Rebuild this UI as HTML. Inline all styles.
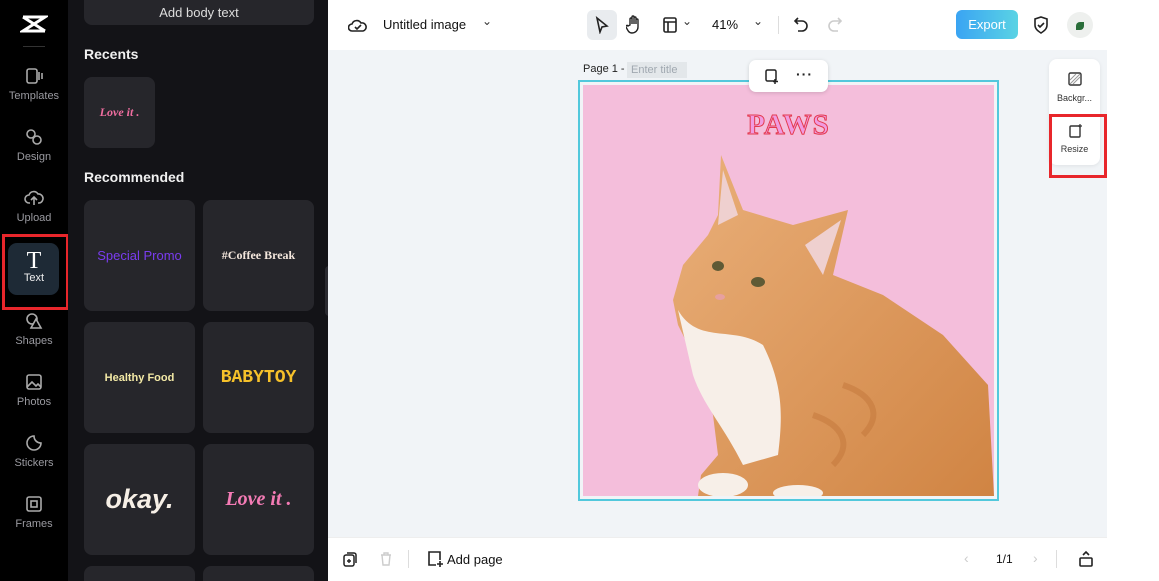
<!DOCTYPE html>
<html><head><meta charset="utf-8"><style>
*{margin:0;padding:0;box-sizing:border-box}
html,body{width:1159px;height:581px;overflow:hidden}
body{font-family:"Liberation Sans",sans-serif;background:#fff;position:relative}
.side{position:absolute;left:0;top:0;width:68px;height:581px;background:#000}
.panel{position:absolute;left:68px;top:0;width:260px;height:581px;background:#131317;overflow:hidden}
.nav{position:absolute;left:0;width:68px;text-align:center;color:#9a9aa0;font-size:11px}
.nav svg{display:block;margin:0 auto 4px}
.card{position:absolute;background:#26262b;border-radius:8px;display:flex;align-items:center;justify-content:center}
h3{position:absolute;color:#f0f0f0;font-size:14px;font-weight:bold}
.main{position:absolute;left:328px;top:50px;width:779px;height:487px;background:#f1f4f7}
.top{position:absolute;left:328px;top:0;width:779px;height:50px;background:#fff}
.bot{position:absolute;left:328px;top:537px;width:779px;height:44px;background:#fff;border-top:1px solid #eee}
.ic{position:absolute}
</style></head><body>
<div class="side">
 <svg class="ic" style="left:20px;top:14px" width="28" height="20" viewBox="0 0 28 20"><path d="M3 3h22L3 17h22M3 3l22 14" stroke="#fff" stroke-width="3" fill="none"/></svg>
 <div style="position:absolute;left:23px;top:46px;width:22px;height:1px;background:#333"></div>
 <div class="nav" style="top:66px"><svg width="20" height="20" viewBox="0 0 20 20"><rect x="3" y="3" width="10" height="14" rx="2" stroke="#aaa" stroke-width="1.6" fill="none"/><path d="M15 6v8M18 7v6" stroke="#aaa" stroke-width="1.6"/></svg>Templates</div>
 <div class="nav" style="top:127px"><svg width="20" height="20" viewBox="0 0 20 20"><circle cx="7" cy="7" r="4" stroke="#aaa" stroke-width="1.6" fill="none"/><circle cx="13" cy="13" r="4" stroke="#aaa" stroke-width="1.6" fill="none"/></svg>Design</div>
 <div class="nav" style="top:188px"><svg width="20" height="20" viewBox="0 0 20 20"><path d="M6 15H5a4 4 0 010-8 5 5 0 019-1 4 4 0 011 9h-1M10 9v8M7 12l3-3 3 3" stroke="#aaa" stroke-width="1.6" fill="none"/></svg>Upload</div>
 <div style="position:absolute;left:8px;top:243px;width:51px;height:52px;border-radius:9px;background:#1e2a36"></div>
 <div style="position:absolute;left:2px;top:234px;width:67px;height:76px;border:3px solid #e8262b"></div>
 <div class="nav" style="top:250px;color:#eee;font-size:11px"><div style="font-family:'Liberation Serif',serif;font-size:24px;line-height:22px;color:#fff">T</div>Text</div>
 <div class="nav" style="top:311px"><svg width="20" height="20" viewBox="0 0 20 20"><circle cx="8" cy="8" r="5" stroke="#aaa" stroke-width="1.6" fill="none"/><path d="M12 8l5 9H7z" stroke="#aaa" stroke-width="1.6" fill="#000"/></svg>Shapes</div>
 <div class="nav" style="top:372px"><svg width="20" height="20" viewBox="0 0 20 20"><rect x="3" y="3" width="14" height="14" rx="2" stroke="#aaa" stroke-width="1.6" fill="none"/><path d="M3 15l5-5 4 4 2-2 3 3" stroke="#aaa" stroke-width="1.6" fill="none"/></svg>Photos</div>
 <div class="nav" style="top:433px"><svg width="20" height="20" viewBox="0 0 20 20"><path d="M10 3a7 7 0 107 7c-4 0-7-3-7-7z" stroke="#aaa" stroke-width="1.6" fill="none"/></svg>Stickers</div>
 <div class="nav" style="top:494px"><svg width="20" height="20" viewBox="0 0 20 20"><rect x="3" y="3" width="14" height="14" rx="2" stroke="#aaa" stroke-width="1.6" fill="none"/><rect x="7" y="7" width="6" height="6" stroke="#aaa" stroke-width="1.6" fill="none"/></svg>Frames</div>
</div>
<div class="panel">
 <div class="card" style="left:16px;top:-10px;width:230px;height:35px;color:#ddd;font-size:13px;padding-top:10px">Add body text</div>
 <h3 style="left:16px;top:46px">Recents</h3>
 <div class="card" style="left:16px;top:77px;width:71px;height:71px;color:#f06ea0;font-family:'Liberation Serif',serif;font-style:italic;font-weight:bold;font-size:12px">Love it .</div>
 <h3 style="left:16px;top:169px">Recommended</h3>
 <div class="card" style="left:16px;top:200px;width:111px;height:111px;color:#7a3cf0;font-size:13px">Special Promo</div>
 <div class="card" style="left:135px;top:200px;width:111px;height:111px;color:#f3e6dc;font-family:'Liberation Serif',serif;font-weight:bold;font-size:12px">#Coffee Break</div>
 <div class="card" style="left:16px;top:322px;width:111px;height:111px;color:#f3e9a6;font-weight:bold;font-size:11px">Healthy Food</div>
 <div class="card" style="left:135px;top:322px;width:111px;height:111px;color:#f6c12a;font-family:'Liberation Mono',monospace;font-weight:bold;font-size:18px">BABYTOY</div>
 <div class="card" style="left:16px;top:444px;width:111px;height:111px;color:#f6efe6;font-weight:bold;font-style:italic;font-size:27px">okay.</div>
 <div class="card" style="left:135px;top:444px;width:111px;height:111px;color:#f47bb5;font-family:'Liberation Serif',serif;font-weight:bold;font-style:italic;font-size:20px">Love it .</div>
 <div class="card" style="left:16px;top:566px;width:111px;height:40px"></div>
 <div class="card" style="left:135px;top:566px;width:111px;height:40px"></div>
 <div style="position:absolute;left:257px;top:266px;width:8px;height:50px;background:#2a2a30;border-radius:4px"></div>
</div>
<div class="top">
 <svg class="ic" style="left:20px;top:16px" width="20" height="18" viewBox="0 0 20 18"><path d="M5 15H4a3.5 3.5 0 010-7 5 5 0 019-1 4 4 0 012 8zM7 11l2 2 4-4" stroke="#222" stroke-width="1.6" fill="none"/></svg>
 <div style="position:absolute;left:55px;top:17px;font-size:13px;color:#111">Untitled image</div>
 <div style="position:absolute;left:154px;top:14px;font-size:12px;color:#333">⌄</div>
 <div style="position:absolute;left:259px;top:10px;width:30px;height:30px;background:#e9ecef;border-radius:6px"></div>
 <svg class="ic" style="left:266px;top:16px" width="16" height="18" viewBox="0 0 16 18"><path d="M3 2l10 8-5 1-2 5z" stroke="#222" stroke-width="1.6" fill="none"/></svg>
 <svg class="ic" style="left:298px;top:15px" width="16" height="19" viewBox="0 0 16 19"><path d="M4 10V4a1 1 0 012 0v5V2a1 1 0 012 0v7V3a1 1 0 012 0v6V5a1 1 0 012 0v7a6 6 0 01-6 6c-3 0-4-2-6-6a1 1 0 012-1z" stroke="#222" stroke-width="1.4" fill="none"/></svg>
 <svg class="ic" style="left:334px;top:16px" width="16" height="18" viewBox="0 0 16 18"><rect x="2" y="2" width="12" height="14" rx="1.5" stroke="#222" stroke-width="1.6" fill="none"/><path d="M2 6h12M6 6v10" stroke="#222" stroke-width="1.6"/></svg>
 <div style="position:absolute;left:354px;top:14px;font-size:12px;color:#333">⌄</div>
 <div style="position:absolute;left:384px;top:17px;font-size:13px;color:#111">41%</div>
 <div style="position:absolute;left:425px;top:14px;font-size:12px;color:#333">⌄</div>
 <div style="position:absolute;left:450px;top:16px;width:1px;height:18px;background:#ddd"></div>
 <svg class="ic" style="left:465px;top:16px" width="16" height="18" viewBox="0 0 16 18"><path d="M5 2L2 5l3 3M2 5h7a5 5 0 010 10H5" stroke="#222" stroke-width="1.6" fill="none"/></svg>
 <svg class="ic" style="left:499px;top:16px" width="16" height="18" viewBox="0 0 16 18"><path d="M11 2l3 3-3 3M14 5H7a5 5 0 000 10h4" stroke="#ccc" stroke-width="1.6" fill="none"/></svg>
 <div style="position:absolute;left:628px;top:10px;width:62px;height:29px;border-radius:6px;background:linear-gradient(90deg,#3aa4f3,#5ad3e4);color:#fff;font-size:13px;text-align:center;line-height:29px">Export</div>
 <svg class="ic" style="left:704px;top:15px" width="18" height="20" viewBox="0 0 18 20"><path d="M9 2l6 2v6c0 4-3 6-6 8-3-2-6-4-6-8V4zM6 10l2 2 4-4" stroke="#222" stroke-width="1.6" fill="none"/></svg>
 <div style="position:absolute;left:739px;top:12px;width:26px;height:26px;border-radius:50%;background:#eef0ee"><div style="position:absolute;left:9px;top:10px;width:8px;height:8px;background:#2a6e3a;border-radius:50% 0"></div></div>
</div>
<div class="main">
 <div style="position:absolute;left:255px;top:13px;font-size:11px;color:#222">Page 1 -</div>
 <div style="position:absolute;left:299px;top:12px;width:60px;height:16px;background:#e3e7ea;color:#a0a8b0;font-size:11px;padding:2px 4px">Enter title</div>
 <div style="position:absolute;left:250px;top:30px;width:421px;height:421px;border:2px solid #52c8dc"></div>
 <div style="position:absolute;left:255px;top:35px;width:411px;height:411px;background:#f4bedb;overflow:hidden">
  <div style="position:absolute;left:0;width:411px;top:24px;text-align:center;font-family:'Liberation Serif',serif;font-weight:bold;font-size:29px;color:#f09be0;-webkit-text-stroke:1px #e43a4e;letter-spacing:1px">PAWS</div>
  <svg width="411" height="411" style="position:absolute;left:0;top:0">
   <defs><linearGradient id="g" x1="0" y1="0" x2="1" y2="1"><stop offset="0" stop-color="#eab07a"/><stop offset="1" stop-color="#d08443"/></linearGradient></defs>
   <path d="M138,70 L160,125 L210,140 L265,125 L250,190 L300,210 L360,250 L405,300 L411,411 L115,411 L118,390 L135,370 L130,330 L110,270 L95,240 L90,215 L100,180 L125,150 L135,130 Z" fill="url(#g)"/>
   <path d="M140,85 L155,130 L135,140 Z" fill="#efd0cf"/>
   <path d="M258,135 L240,190 L222,160 Z" fill="#efd0cf"/>
   <path d="M95,225 C115,260 150,240 180,260 C200,300 200,330 195,370 L160,380 C140,340 120,320 110,290 Z" fill="#f7efe8"/>
   <ellipse cx="140" cy="400" rx="25" ry="12" fill="#f7efe8"/>
   <ellipse cx="215" cy="408" rx="25" ry="8" fill="#f7efe8"/>
   <path d="M230,330 C260,340 270,360 250,380 M260,300 C290,310 300,330 280,350" stroke="#c2753a" stroke-width="6" fill="none" opacity=".5"/>
   <ellipse cx="135" cy="181" rx="6" ry="5" fill="#5f5a35"/><ellipse cx="175" cy="197" rx="7" ry="5" fill="#5f5a35"/>
   <ellipse cx="137" cy="212" rx="5" ry="3" fill="#e7a0a0"/>
  </svg>
 </div>
 <div style="position:absolute;left:421px;top:10px;width:79px;height:32px;background:#fff;border-radius:7px;box-shadow:0 1px 4px rgba(0,0,0,.15)">
  <svg class="ic" style="left:15px;top:8px" width="16" height="16" viewBox="0 0 16 16"><rect x="2" y="2" width="10" height="11" rx="1.5" stroke="#222" stroke-width="1.5" fill="none"/><path d="M11 11v5M9 13.5h5" stroke="#222" stroke-width="1.5"/></svg>
  <div style="position:absolute;left:47px;top:6px;font-size:14px;font-weight:bold;color:#222;letter-spacing:1px">···</div>
 </div>
 <div style="position:absolute;left:721px;top:9px;width:51px;height:106px;background:#fff;border-radius:8px;box-shadow:0 1px 4px rgba(0,0,0,.08)">
  <svg class="ic" style="left:18px;top:12px" width="16" height="16" viewBox="0 0 16 16"><rect x="2" y="2" width="12" height="12" rx="1.5" stroke="#333" stroke-width="1.4" fill="none"/><path d="M3 9l6-6M6 13l7-7M3 13l10-10" stroke="#999" stroke-width="1"/></svg>
  <div style="position:absolute;left:0;width:51px;top:34px;text-align:center;font-size:9px;color:#333">Backgr...</div>
  <svg class="ic" style="left:18px;top:64px" width="16" height="16" viewBox="0 0 16 16"><rect x="3" y="3" width="10" height="11" rx="1" stroke="#333" stroke-width="1.4" fill="none"/><path d="M13 1v4M11 3h4" stroke="#333" stroke-width="1.2"/></svg>
  <div style="position:absolute;left:0;width:51px;top:85px;text-align:center;font-size:9px;color:#333">Resize</div>
 </div>
 <div style="position:absolute;left:721px;top:64px;width:58px;height:64px;border:3px solid #e8262b"></div>
</div>
<div class="bot">
 <svg class="ic" style="left:14px;top:13px" width="16" height="16" viewBox="0 0 16 16"><rect x="2" y="4" width="10" height="11" rx="2" stroke="#222" stroke-width="1.5" fill="none"/><path d="M5 2h7a2 2 0 012 2v8" stroke="#222" stroke-width="1.5" fill="none"/><path d="M7 8v4M5 10h4" stroke="#222" stroke-width="1.4"/></svg>
 <svg class="ic" style="left:51px;top:13px" width="14" height="16" viewBox="0 0 14 16"><path d="M2 4h10M5 4V2h4v2M3 4l1 10h6l1-10" stroke="#ccc" stroke-width="1.4" fill="none"/></svg>
 <div style="position:absolute;left:80px;top:12px;width:1px;height:18px;background:#ddd"></div>
 <svg class="ic" style="left:98px;top:12px" width="18" height="18" viewBox="0 0 18 18"><path d="M10 15H3V2h11v8" stroke="#222" stroke-width="1.6" fill="none"/><path d="M14 11v6M11 14h6" stroke="#222" stroke-width="1.6"/></svg>
 <div style="position:absolute;left:119px;top:14px;font-size:13px;color:#111">Add page</div>
 <div style="position:absolute;left:636px;top:12px;font-size:14px;color:#ccc">‹</div>
 <div style="position:absolute;left:668px;top:14px;font-size:12px;color:#111">1/1</div>
 <div style="position:absolute;left:705px;top:12px;font-size:14px;color:#ccc">›</div>
 <div style="position:absolute;left:728px;top:12px;width:1px;height:18px;background:#ddd"></div>
 <svg class="ic" style="left:750px;top:12px" width="16" height="18" viewBox="0 0 16 18"><rect x="2" y="8" width="12" height="8" rx="1" stroke="#222" stroke-width="1.6" fill="none"/><path d="M5 5l3-3 3 3" stroke="#222" stroke-width="1.6" fill="none"/></svg>
</div>
</body></html>
